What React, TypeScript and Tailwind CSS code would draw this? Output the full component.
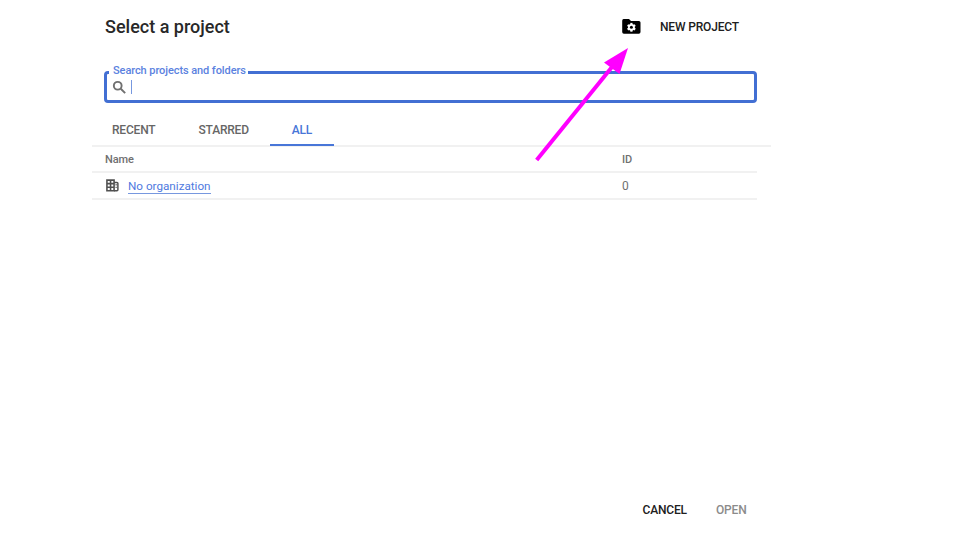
import React from "react";

function FolderGearIcon() {
  const teeth = [0, 60, 120];
  return (
    <svg className="block h-[15px] w-[19px]" viewBox="0 0 19 15" fill="#000">
      <path d="M2 0h5l2 2h7.9a1.6 1.6 0 0 1 1.6 1.6v9.4a1.7 1.7 0 0 1-1.7 1.7H1.9A1.7 1.7 0 0 1 .2 13V1.7A1.7 1.7 0 0 1 2 0z" />
      <circle cx="9.4" cy="8.3" r="3.4" fill="#fff" />
      {teeth.map((angle) => (
        <path key={angle} d="M9.4 3.9v8.8" stroke="#fff" strokeWidth="2.2" transform={`rotate(${angle} 9.4 8.3)`} />
      ))}
      <circle cx="9.4" cy="8.3" r="1.5" />
    </svg>
  );
}

function SearchIcon() {
  return (
    <svg className="block h-[17px] w-[17px]" viewBox="0 0 24 24" fill="none" stroke="#707070" strokeWidth="2.7">
      <circle cx="9.5" cy="9.5" r="5.5" />
      <path d="M13.8 13.8L20 20" />
    </svg>
  );
}

function BuildingIcon() {
  return (
    <svg className="mb-[1px] block h-[13px] w-[13px]" viewBox="0 0 14 14" fill="none" stroke="#505050">
      <path strokeWidth="1.7" d="M1 1.2h7.7v11.5H1zM1 5h7.7M1 8.8h7.7M4.9 1.2v11.5" />
      <path strokeWidth="1.6" d="M8.7 3.7h3.1q1 0 1 1v7q0 1-1 1H8.7" />
      <path strokeWidth="1.2" d="M10.9 5.4v1.5M10.9 8.3v1.5" />
    </svg>
  );
}

function Arrow() {
  return (
    <svg className="pointer-events-none absolute left-[530px] top-[40px] h-[130px] w-[110px]" viewBox="530 40 110 130" fill="#f0f">
      <path d="M536.7 160L612 67" stroke="#f0f" strokeWidth="4" />
      <path d="M628 48L604 62.5L619.5 74z" />
    </svg>
  );
}

export default function App() {
  return (
    <div className="relative h-[540px] w-[960px] overflow-hidden bg-white font-['Roboto',sans-serif]">
      <main className="ml-[92px] flex h-full w-[679px] flex-col">
        <header className="flex h-[71px] shrink-0 items-start pl-[13px]">
          <h1 className="w-[517px] pt-[15.5px] text-[18px] leading-[22px] font-medium text-[#282828]">Select a project</h1>
          <button className="flex items-start pt-[19px] text-[12px] leading-[15px] font-medium tracking-[-0.17px] text-[#202020]">
            <FolderGearIcon />
            <span className="ml-[19px] pt-px whitespace-nowrap">NEW PROJECT</span>
          </button>
        </header>

        <div className="relative ml-[12px] flex h-[32px] w-[653px] shrink-0 items-center rounded-[4px] border-[3px] border-[#426fd3] pl-[4px]">
          <span className="absolute left-[2px] top-[-10px] bg-white pr-[2px] pl-[4px] text-[11px] leading-[14px] font-medium tracking-[-0.08px] whitespace-nowrap text-[#5b82e0]">
            Search projects and folders
          </span>
          <SearchIcon />
          <span className="ml-[3px] h-[14px] w-px bg-[#7798df]" />
        </div>

        <nav className="relative z-10 flex h-[43px] w-full shrink-0 items-stretch text-[12px] leading-[14px] font-medium tracking-[-0.2px] text-[#666]">
          <span className="w-[86px] pt-[20px] pl-[20px]">RECENT</span>
          <span className="w-[92px] pt-[20px] pl-[20.5px]">STARRED</span>
          <span className="w-[64px] border-b-2 border-[#4876d8] pt-[20px] text-center text-[#4876d8]">ALL</span>
        </nav>
        <div className="-mt-px h-[2px] w-full shrink-0 bg-[#f1f1f1]" />

        <section className="w-[665px] text-[11px] leading-[14px] tracking-[-0.1px] text-[#707070]">
          <div className="flex h-[26px] items-center border-b-2 border-[#f1f1f1] pt-px pl-[13px] font-medium">
            <span className="w-[517px]">Name</span>
            <span>ID</span>
          </div>
          <div className="flex h-[27px] items-center border-b-2 border-[#f1f1f1] pl-[14px]">
            <BuildingIcon />
            <div className="ml-[9px] w-[494px] text-[11.7px] tracking-normal">
              <a className="mt-[2px] block w-max border-b border-[#7798df] leading-[13px] text-[#4f7ae0]">No organization</a>
            </div>
            <span className="text-[12px]">0</span>
          </div>
        </section>

        <footer className="mt-auto flex h-[37px] pl-[550.5px] text-[12px] leading-[14px] font-medium tracking-[-0.17px]">
          <button className="h-[14px] w-[73.5px] text-left text-[#202020]">CANCEL</button>
          <button className="h-[14px] text-[#8b8b8b]">OPEN</button>
        </footer>
      </main>
      <Arrow />
    </div>
  );
}
